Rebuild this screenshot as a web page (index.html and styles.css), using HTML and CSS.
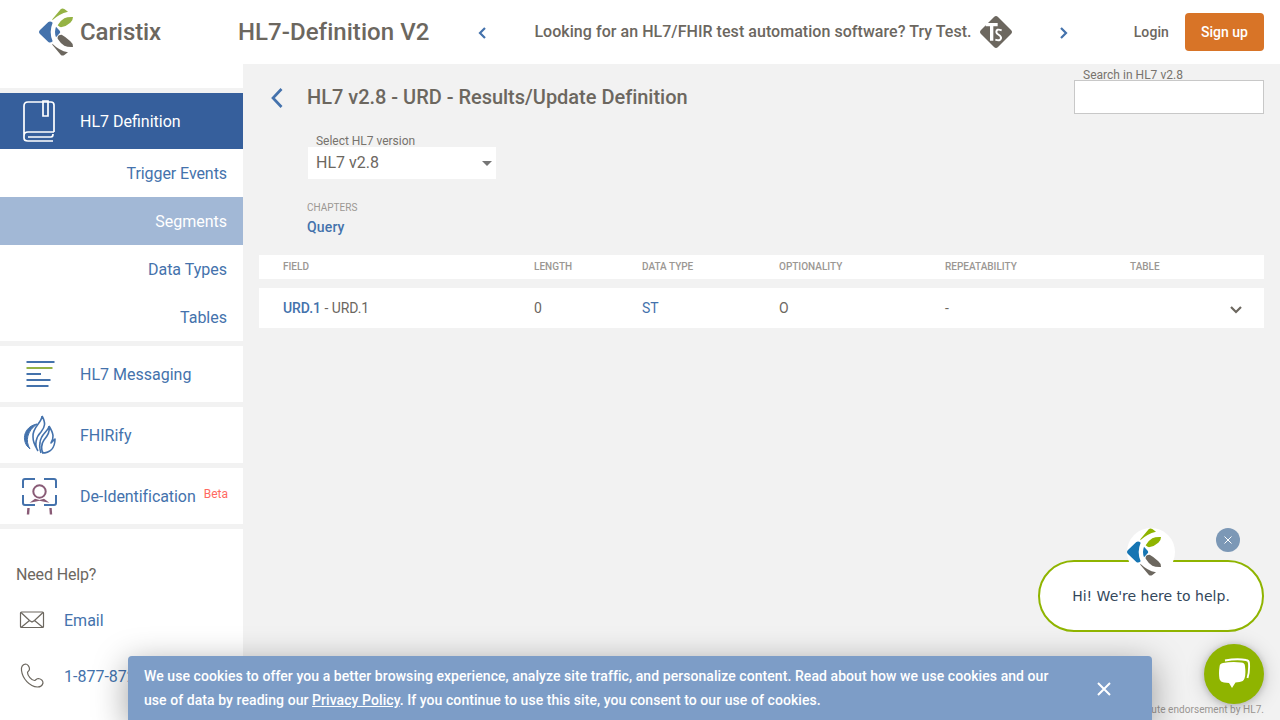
FILE: index.html
```
<!DOCTYPE html>
<html lang="en">
<head>
<meta charset="utf-8">
<title>HL7-Definition V2</title>
<link rel="stylesheet" href="styles.css">
</head>
<body>
<svg class="defs" width="0" height="0">
  <symbol id="logo" viewBox="0 0 102 144">
    <path class="l-blue" d="M3 66 28 42Q34 38 41 44Q29 72 41 100Q34 106 28 102L3 78Q-3 72 3 66zM51 56 62 68Q65 72 62 76L51 88Q45 72 51 56z"/>
    <path class="l-green" d="M40 34 65 4Q70-1 76 3L87 11Q60 17 40 37zM56 52Q66 36 76 31 86 26 102 27 102 38 94 44 80 56 66 58 60 57 56 52z"/>
    <path class="l-gray" d="M40 110 65 140Q70 145 76 141L87 133Q60 127 40 107zM56 92Q66 108 76 113 86 118 102 117 102 106 94 100 80 86 68 80 54 80 56 92z"/>
  </symbol>
</svg>
<header class="topbar">
  <a class="brand"><svg class="logo"><use href="#logo"/></svg><span>Caristix</span></a>
  <h1 class="app-title">HL7-Definition V2</h1>
  <div class="promo">
    <svg class="arrow" viewBox="0 0 10 14"><path d="M8 2 3 7l5 5"/></svg>
    <div class="promo-text"><span>Looking for an HL7/FHIR test automation software? Try Test.</span>
      <svg class="ts" viewBox="0 0 96 96"><path fill="#6c675f" d="M42 3Q48-3 54 3L93 42Q99 48 93 54L54 93Q48 99 42 93L3 54Q-3 48 3 42z"/><path d="M17 26H53M35 26V74" fill="none" stroke="#fff" stroke-width="10"/><path d="M65 43Q49 37 49 48C49 57 65 56 63 67Q61 76 46 71" fill="none" stroke="#fff" stroke-width="6"/></svg>
    </div>
    <svg class="arrow" viewBox="0 0 10 14"><path d="m2 2 5 5-5 5"/></svg>
  </div>
  <div class="account"><a>Login</a><button class="signup">Sign up</button></div>
</header>
<div class="shell">
  <nav class="sidebar">
    <div class="group">
      <a class="item current"><svg viewBox="0 0 36 44" class="ico"><g fill="none" stroke="#fff" stroke-width="1.7"><path d="M32 33V6Q32 3 29 3H6Q2 3 2 7v32q0 3 4 3h25M32 33H6q-4 0-4 4M6 38h23q2 0 2-3"/><path d="M21 2h5v15h-5z"/></g></svg><span>HL7 Definition</span></a>
      <a class="sub tight">Trigger Events</a>
      <a class="sub selected">Segments</a>
      <a class="sub">Data Types</a>
      <a class="sub">Tables</a>
    </div>
    <a class="item"><svg viewBox="0 0 36 44" class="ico"><g fill="none" stroke="#4472ac" stroke-width="2"><path d="M4.500 10h28M4.500 22h14.500M4.500 28h24M4.500 34h22"/><path stroke="#95b344" d="M4.500 16h26"/></g></svg><span>HL7 Messaging</span></a>
    <a class="item"><svg viewBox="0 0 36 44" class="ico"><g fill="none" stroke="#4472ac" stroke-width="1.6" stroke-linejoin="round"><path d="M20 3c4 7 3 11-1 16-5 5-7 13-3 19M20 3c0 7-10 11-9 21 0 4 1 7 4 12M27 13c1 6-1 9-5 14-3 4-3 10-1 13M27 13c0 5-9 8-9 17-1 4 0 7 1 10M27 13c5 8 5 12 2 17l4-4c0 9-5 14-13 14"/><path fill="#4472ac" stroke-width="1" d="M15 11C4 13-1 24 5 33l3 3C3 28 5 18 15 11z"/></g></svg><span>FHIRify</span></a>
    <a class="item"><svg viewBox="0 0 36 44" class="ico"><g fill="none" stroke="#4472ac" stroke-width="2"><path d="M1 14V7q0-2 2-2h10M22 5h10q2 0 2 2v7M1 21v8q0 2 2 2h10M22 31h10q2 0 2-2v-8"/><g stroke="#895b76"><circle cx="17.500" cy="17.500" r="6.200"/><path stroke-width="2.400" d="M6.500 34 6 40.500M28.500 34l.5 6.500"/><path fill="#895b76" stroke="none" d="m7.500 28.700 5.500-4 4.500 1.300 4.500-1.300 5.500 4-5.500-1-4.500-1-4.500 1z"/></g></g></svg><span class="tight">De-Identification</span><em>Beta</em></a>
    <div class="help">
      <p>Need Help?</p>
      <a><svg viewBox="0 0 32 32" class="hi"><g fill="none" stroke="#6c675f" stroke-width="1.200"><rect x="4.500" y="7" width="23" height="15.500" rx="1"/><path d="m5 7.500 8.500 8 2.500 1.500 2.500-1.500 8.500-8M5 22.500l8.500-7M27 22.500l-8.500-7"/></g></svg><span>Email</span></a>
      <a><svg viewBox="0 0 32 32" class="hi"><path fill="none" stroke="#6c675f" stroke-width="1.200" d="M9.500 3C7 3.500 5 5.500 5.500 9.500c1 8 8 16 16 16.500 3 0 5-2 5.500-4 0-2-2-4-4.500-4.500-2 0-3 2-4 2-3 0-7-5-7-8 0-1 2-1.500 2-3.500 0-2.500-2-5-4-5z"/></svg><span>1-877-872</span></a>
    </div>
  </nav>
  <main class="content">
    <div class="head">
      <svg class="back" viewBox="0 0 14 22"><path d="M11.500 2 3 11l8.500 9"/></svg>
      <h2>HL7 v2.8 - URD - Results/Update Definition</h2>
      <label class="search"><span>Search in HL7 v2.8</span><input type="text"></label>
    </div>
    <div class="meta">
      <div class="small-label">Select HL7 version</div>
      <div class="select"><span>HL7 v2.8</span><i class="caret"></i></div>
      <div class="chapters">CHAPTERS</div>
      <a class="query">Query</a>
    </div>
    <div class="row thead"><span>FIELD</span><span>LENGTH</span><span>DATA TYPE</span><span>OPTIONALITY</span><span>REPEATABILITY</span><span>TABLE</span></div>
    <div class="row trow"><span><b>URD.1</b> - URD.1</span><span>0</span><a>ST</a><span>O</span><span>-</span><span></span><svg class="down" viewBox="0 0 14 10"><path d="m2 2 5 5 5-5"/></svg></div>
  </main>
</div>
<div class="endorse">tute endorsement by HL7.</div>
<div class="cookie">
  <p>We use cookies to offer you a better browsing experience, analyze site traffic, and personalize content. Read about how we use cookies and our<br>use of data by reading our <u>Privacy Policy</u>. If you continue to use this site, you consent to our use of cookies.</p>
  <svg viewBox="0 0 16 16"><path d="m2 2 12 12M14 2 2 14"/></svg>
</div>
<div class="greeting">Hi! We're here to help.<div class="avatar"><svg class="logo"><use href="#logo"/></svg></div></div>
<div class="dismiss"><svg viewBox="0 0 8 8"><path d="m.5.5 7 7m0-7-7 7"/></svg></div>
<div class="chat"><svg viewBox="0 0 32 32"><path fill="#fff" d="M.5 9Q.5 5.500 4 5 13 3.500 22 4.500q4 0 4 4 1 8-.5 12-1 3-5 3.500l-4 .5L13 30l-3-5-5-.5Q1.500 24 .5 21-.5 15 .5 9z"/><path fill="none" stroke="#fff" stroke-width="1.900" d="M6 2.500Q18 .3 27 2q3 .3 3 3.500 .5 8-1.500 14.500"/></svg></div>
</body>
</html>
```
FILE: styles.css
```
* { box-sizing: border-box; }
body { margin: 0; height: 720px; overflow: hidden; background: #f2f2f2; color: #6c675f; font: 400 16px/24px Roboto, sans-serif; position: relative; }
.defs { position: absolute; }
h1, h2, p { margin: 0; font-weight: 500; }
.l-blue { fill: var(--blue, #4472ac); }
.l-green { fill: var(--green, #95b344); }
.l-gray { fill: #6c675f; }
.logo { width: 34px; height: 48px; display: block; }
.topbar { height: 64px; background: #fff; display: flex; align-items: center; padding: 0 16px 0 39px; }
.brand { width: 199px; display: flex; align-items: center; gap: 7px; font-size: 24px; font-weight: 500; letter-spacing: -.08px; }
.app-title { width: 239px; font-size: 24px; line-height: 32px; letter-spacing: .05px; }
.promo { width: 592px; display: flex; align-items: center; justify-content: space-between; font-weight: 500; letter-spacing: .045px; }
.promo-text { display: flex; align-items: center; gap: 8px; white-space: nowrap; }
.ts { width: 32px; height: 32px; }
.arrow { width: 10px; height: 14px; margin-top: 2px; fill: none; stroke: #4472ac; stroke-width: 2.2; }
.account { margin-left: auto; display: flex; align-items: center; gap: 16px; font-size: 14px; font-weight: 500; letter-spacing: .1px; }
.signup { width: 79px; height: 38px; border: 0; border-radius: 4px; background: #d87427; color: #fff; font: 500 14px Roboto, sans-serif; padding: 0; }
.shell { display: flex; height: 656px; }
.sidebar { width: 243px; padding-top: 24px; background: #fff; display: flex; flex-direction: column; }
.group, .item, .help { border-top: 5px solid #f2f2f2; }
.group .item { border-top: 0; height: 56px; }
.item { height: 61px; display: flex; align-items: center; padding-left: 22px; color: #4472ac; flex: none; }
.item span { padding-top: 2px; }
.item.current { background: #365f9c; color: #fff; }
.ico { width: 36px; height: 44px; margin-right: 22px; }
.item em { color: #ff6961; font-style: normal; font-size: 12px; margin: -4px 0 0 8px; }
.sub { height: 48px; display: flex; align-items: center; justify-content: flex-end; padding: 2px 16px 0 0; color: #4472ac; }
.tight { letter-spacing: -.07px; }
.selected { background: #a2b8d6; color: #fff; }
.help { padding: 34px 16px 0; flex: 1; }
.help p { font-weight: 400; margin-bottom: 6px; letter-spacing: -.15px; }
.help a { height: 56px; display: flex; gap: 16px; align-items: center; color: #4472ac; }
.hi { width: 32px; height: 32px; }
.content { flex: 1; padding: 0 16px; }
.head { height: 67px; display: flex; align-items: flex-start; }
.back { width: 14px; height: 22px; margin: 23px 23px 0 11px; fill: none; stroke: #4472ac; stroke-width: 2.7; }
.head h2 { font-size: 20px; line-height: 28px; margin-top: 19px; letter-spacing: -.02px; }
.search { margin-left: auto; width: 190px; padding-top: 5px; }
.search span, .small-label { display: block; font-size: 12px; line-height: 11px; padding-left: 9px; color: #77736d; letter-spacing: -.02px; }
.search span { padding-top: 1px; height: 11px; letter-spacing: .02px; }
.search input { display: block; width: 190px; height: 34px; border: 1px solid #c8c8c8; background: #fff; }
.meta { padding: 5px 0 0 48px; height: 124px; }
.select { width: 188px; height: 32px; margin-left: 1px; background: #fff; padding: 0 4px 0 8px; display: flex; align-items: center; justify-content: space-between; }
.caret { border: 5px solid transparent; border-top-color: #757575; border-bottom: 0; }
.chapters { margin-top: 22px; font-size: 10px; line-height: 14px; color: #9b9793; }
.query { display: block; font-size: 14px; line-height: 20px; margin-top: 2px; font-weight: 500; color: #4472ac; letter-spacing: .15px; }
.row { display: grid; grid-template-columns: 251px 108px 137px 166px 185px 99px 14px; align-items: center; padding-left: 24px; background: #fff; font-size: 14px; }
.row a, .row b { color: #4472ac; font-weight: 500; }
.row a { font-weight: 400; }
.thead { height: 24px; margin-bottom: 9px; font-size: 10px; font-weight: 500; color: #9b9793; }
.trow { height: 40px; letter-spacing: -.05px; }
.down { width: 14px; height: 10px; margin-top: 3px; fill: none; stroke: #6c675f; stroke-width: 2.2; }
.endorse { position: absolute; right: 16px; top: 704px; font-size: 10px; line-height: 12px; color: #9b9793; letter-spacing: .05px; }
.cookie { position: absolute; left: 128px; top: 656px; width: 1024px; height: 64px; padding: 8px 40px 0 16px; border-radius: 4px 4px 0 0; background: #7d9dc7; color: #fff; box-shadow: 0 8px 34px rgba(0,0,0,.38); display: flex; justify-content: space-between; font-size: 14px; }
.cookie p { white-space: nowrap; letter-spacing: .066px; }
.cookie svg { width: 16px; height: 16px; margin-top: 17px; fill: none; stroke: #fff; stroke-width: 2; }
.greeting { position: absolute; left: 1038px; top: 560px; width: 226px; height: 72px; border: 2px solid #8fb400; border-radius: 36px; background: #fff; color: #33475b; font: 14px/68px "DejaVu Sans", sans-serif; text-align: center; }
.avatar { --blue: #1675b3; --green: #8fb400; position: absolute; left: 87px; top: -34px; width: 48px; height: 48px; border-radius: 50%; background: #fff; }
.dismiss { position: absolute; left: 1216px; top: 528px; width: 24px; height: 24px; border-radius: 50%; background: #7c98b6; display: flex; align-items: center; justify-content: center; }
.dismiss svg { width: 8px; height: 8px; fill: none; stroke: #fff; }
.chat { position: absolute; left: 1204px; top: 644px; width: 60px; height: 60px; border-radius: 50%; background: #8fb400; box-shadow: 0 1px 6px rgba(0,0,0,.2), 0 2px 20px rgba(0,0,0,.18); padding: 14px 0 0 15px; }
.chat svg { width: 32px; height: 32px; display: block; }
```
